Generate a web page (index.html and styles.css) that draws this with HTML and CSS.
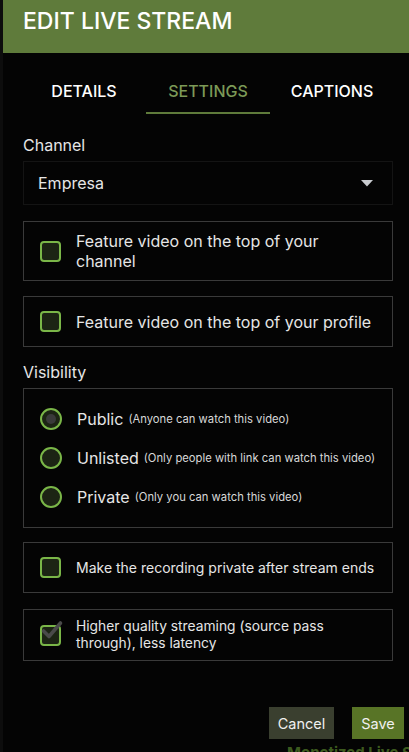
FILE: index.html
```html
<!DOCTYPE html>
<html>
<head>
<meta charset="utf-8">
<link rel="stylesheet" href="styles.css">
</head>
<body>
<div class="page">
  <div class="modal">
    <div class="header"><h1 class="title">EDIT LIVE STREAM</h1></div>
    <div class="tabs">
      <div class="tab">DETAILS</div>
      <div class="tab active">SETTINGS</div>
      <div class="tab">CAPTIONS</div>
    </div>
    <div class="content">
      <div class="label">Channel</div>
      <div class="select">
        <span>Empresa</span>
        <svg class="arrow" width="12" height="7" viewBox="0 0 12 7"><path d="M0 0H12L6 6.5Z" fill="#c9ccd0"/></svg>
      </div>

      <div class="card check-card first">
        <span class="box"></span>
        <span class="text">Feature video on the top of your channel</span>
      </div>
      <div class="card check-card">
        <span class="box"></span>
        <span class="text">Feature video on the top of your profile</span>
      </div>

      <div class="label vis-label">Visibility</div>
      <div class="card radio-card">
        <div class="radio-row"><span class="radio checked"></span><span class="rlabel">Public</span><span class="hint">(Anyone can watch this video)</span></div>
        <div class="radio-row"><span class="radio"></span><span class="rlabel">Unlisted</span><span class="hint">(Only people with link can watch this video)</span></div>
        <div class="radio-row"><span class="radio"></span><span class="rlabel">Private</span><span class="hint">(Only you can watch this video)</span></div>
      </div>

      <div class="card check-card after-radio small">
        <span class="box"></span>
        <span class="text">Make the recording private after stream ends</span>
      </div>
      <div class="card check-card tight">
        <span class="box checked"><svg width="24" height="22" viewBox="0 0 24 22"><path d="M3.5 12L9 17.5L20.5 4" fill="none" stroke="#4a4a4a" stroke-width="3.6" stroke-linecap="round" stroke-linejoin="round"/></svg></span>
        <span class="text">Higher quality streaming (source pass through), less latency</span>
      </div>

      <div class="actions">
        <button class="btn cancel">Cancel</button>
        <button class="btn save">Save</button>
      </div>
    </div>
  </div>
  <div class="behind">Monetized Live S</div>
</div>
</body>
</html>
```
FILE: styles.css
```css
* { box-sizing: border-box; }
html, body { margin: 0; padding: 0; }
body {
  background: #0d0d0d;
  font-family: Inter, "Noto Sans", sans-serif;
  color: #e6e6e6;
  width: 409px;
  height: 752px;
  overflow: hidden;
}
.page { position: relative; height: 752px; }
.modal {
  margin-left: 3px;
  width: 413px;
  background: #040404;
  height: 752px;
}
.header {
  background: #5f7b3b;
  height: 53px;
  padding: 9px 0 0 20px;
}
.title {
  margin: 0;
  font-size: 23px;
  font-weight: 500;
  color: #ffffff;
  line-height: 24px;
}
.tabs {
  display: flex;
  padding-left: 19px;
  margin-top: 19px;
}
.tab {
  flex: 0 0 124px;
  text-align: center;
  font-size: 16px;
  font-weight: 500;
  color: #ffffff;
  height: 42px;
  line-height: 38px;
  border-bottom: 2px solid transparent;
}
.tab.active { color: #7c9a57; border-bottom-color: #5f7b3b; }
.content { padding: 22px 20px 0 20px; width: 410px; }
.label { font-size: 16px; color: #e6e6e6; line-height: 18px; }
.select {
  margin-top: 7px;
  height: 44px;
  border: 1px solid #141414;
  display: flex;
  align-items: center;
  justify-content: space-between;
  padding: 0 19px 0 14px;
  font-size: 16px;
}
.arrow { display: block; }
.card {
  border: 1px solid #3a3a3a;
  margin-top: 15px;
}
.card.first { margin-top: 16px; }
.card.after-radio { margin-top: 14px; }
.card.tight { margin-top: 16px; }
.check-card {
  display: flex;
  align-items: center;
  min-height: 51px;
  padding: 9px 12px 9px 16px;
  font-size: 16px;
  line-height: 20px;
}
.check-card.small { font-size: 14px; }
.check-card.tight {
  font-size: 13.8px;
  line-height: 17px;
  min-height: 52px;
  padding-top: 8px;
  padding-bottom: 8px;
}
.box {
  flex: 0 0 21px;
  width: 21px;
  height: 21px;
  border: 2px solid #7ab648;
  border-radius: 4px;
  background: #1c2414;
  margin-right: 15px;
  position: relative;
}
.box svg { position: absolute; left: -2px; top: -8px; }
.text { color: #e6e6e6; }
.vis-label { margin-top: 16px; }
.radio-card {
  margin-top: 7px;
  padding: 19px 16px;
  display: flex;
  flex-direction: column;
  gap: 17px;
}
.radio-row { display: flex; align-items: center; height: 22px; white-space: nowrap; }
.radio {
  width: 22px;
  height: 22px;
  border: 2px solid #7ab648;
  border-radius: 50%;
  background: #1c2414;
  margin-right: 15px;
  position: relative;
  flex: 0 0 22px;
}
.radio.checked::after {
  content: "";
  position: absolute;
  left: 4px; top: 4px;
  width: 10px; height: 10px;
  border-radius: 50%;
  background: #3a3a3a;
}
.rlabel { font-size: 16px; color: #e6e6e6; margin-right: 5px; }
.hint { font-size: 11.25px; color: #d8d8d8; }
.actions {
  display: flex;
  justify-content: flex-end;
  gap: 18px;
  margin-top: 46px;
  margin-right: -11px;
}
.btn {
  border: 0;
  height: 32px;
  font-family: Inter, "Noto Sans", sans-serif;
  font-size: 14.5px;
  color: #f0f0f0;
  padding: 0;
}
.btn.cancel { background: #3a3f2f; width: 65px; }
.btn.save { background: #587426; width: 52px; }
.behind {
  position: absolute;
  left: 287px;
  top: 743px;
  font-size: 15px;
  font-weight: 700;
  color: #3c5a1e;
  white-space: nowrap;
}
```
